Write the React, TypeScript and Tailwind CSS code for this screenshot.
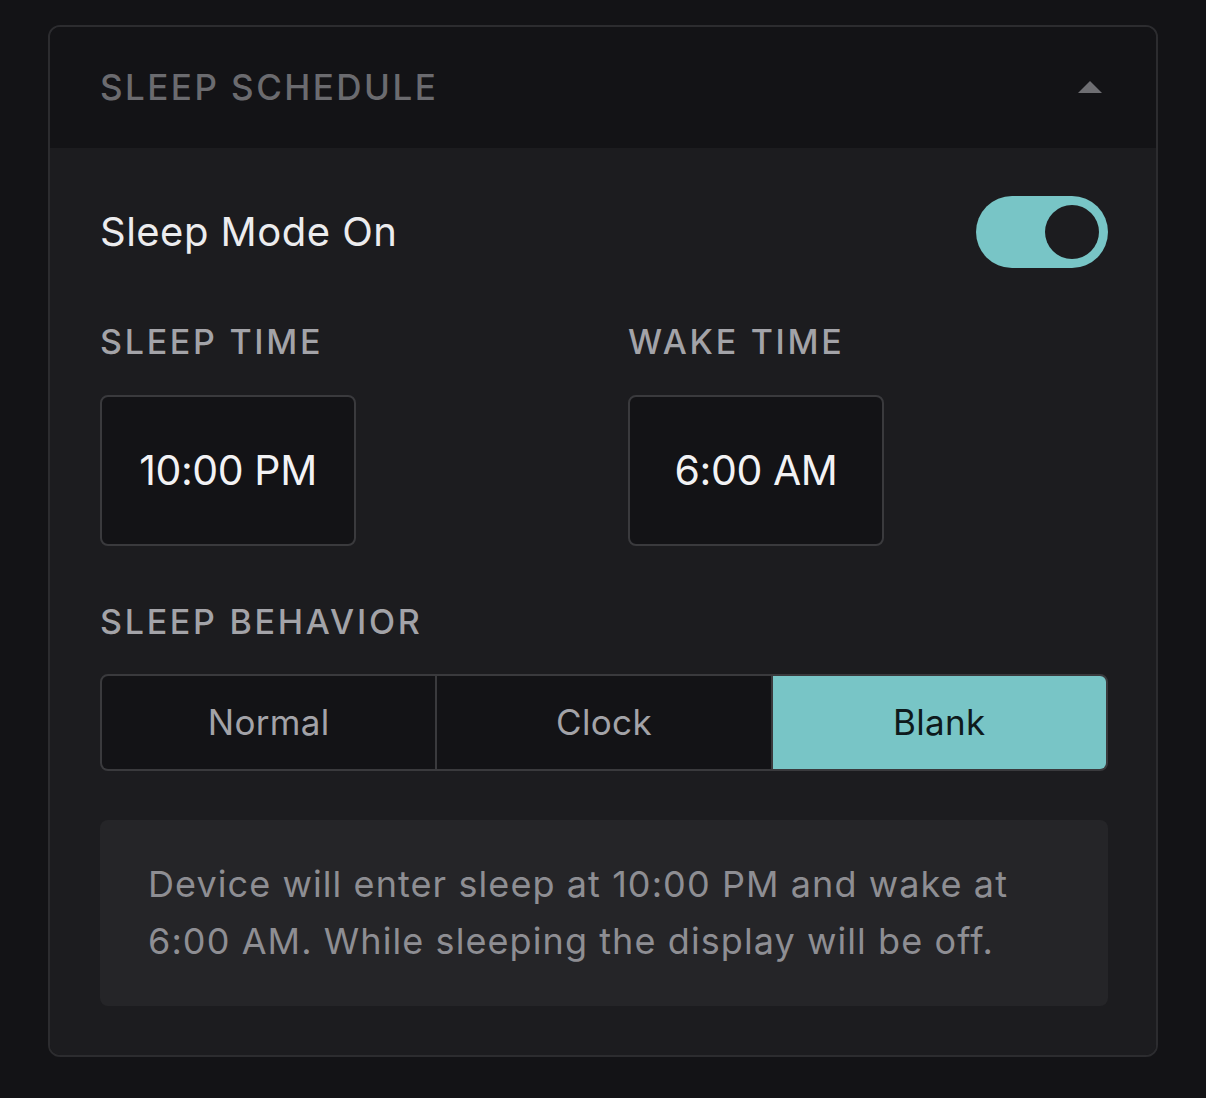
import React, { useState } from 'react';

type Behavior = 'Normal' | 'Clock' | 'Blank';

const BEHAVIORS: Behavior[] = ['Normal', 'Clock', 'Blank'];

export default function App() {
  const [open, setOpen] = useState(true);
  const [sleepOn, setSleepOn] = useState(true);
  const [behavior, setBehavior] = useState<Behavior>('Blank');

  return (
    <div
      className="min-h-screen bg-[#131316] px-12 pt-[25px] pb-[42px]"
      style={{ fontFamily: 'Inter, "Open Sans", sans-serif' }}
    >
      <div className="border-2 border-[#2c2c2f] rounded-[12px] overflow-hidden">
        {/* Header */}
        <button
          onClick={() => setOpen(!open)}
          className="w-full h-[121px] bg-[#131316] pl-[50px] pr-[54px] flex items-center justify-between"
        >
          <span className="text-[35px] tracking-[0.07em] text-[#6b6b6f] font-medium">SLEEP SCHEDULE</span>
          <svg width="24" height="12" viewBox="0 0 24 12" className="mt-[-2px]">
            <polygon points="12,0 24,12 0,12" fill="#6e6e72" />
          </svg>
        </button>

        {open && (
          <div className="bg-[#1c1c1f] pl-[50px] pr-[48px] pt-[48px] pb-[49px] flex flex-col">
            {/* Sleep mode row */}
            <div className="flex items-center justify-between">
              <span className="text-[40px] text-[#ececee] tracking-[0.012em]">Sleep Mode On</span>
              <button
                onClick={() => setSleepOn(!sleepOn)}
                className={`w-[132px] h-[72px] rounded-full flex items-center px-[9px] ${
                  sleepOn ? 'bg-[#78c5c6] justify-end' : 'bg-[#3a3a3d] justify-start'
                }`}
              >
                <span className="w-[54px] h-[54px] rounded-full bg-[#1c1c1f]" />
              </button>
            </div>

            {/* Times */}
            <div className="grid grid-cols-2 gap-[48px] mt-[53px]">
              {[
                { label: 'SLEEP TIME', value: '10:00 PM' },
                { label: 'WAKE TIME', value: '6:00 AM' },
              ].map((t) => (
                <div key={t.label} className="flex flex-col">
                  <span className="text-[34px] leading-[41px] tracking-[0.08em] text-[#a3a3a8] font-medium">
                    {t.label}
                  </span>
                  <div className="mt-[33px] w-[256px] h-[151px] bg-[#131316] border-2 border-[#3a3a3d] rounded-[8px] flex items-center justify-center">
                    <span className="text-[41px] text-[#f2f2f4] tracking-[-0.01em]">{t.value}</span>
                  </div>
                </div>
              ))}
            </div>

            {/* Behavior */}
            <span className="mt-[55px] text-[34px] leading-[41px] tracking-[0.08em] text-[#a3a3a8] font-medium">
              SLEEP BEHAVIOR
            </span>
            <div className="mt-[32px] h-[97px] border-2 border-[#3a3a3d] rounded-[8px] overflow-hidden grid grid-cols-3 bg-[#3a3a3d] gap-[2px]">
              {BEHAVIORS.map((b) => (
                <button
                  key={b}
                  onClick={() => setBehavior(b)}
                  className={`flex items-center justify-center text-[35px] tracking-[0.01em] ${
                    behavior === b ? 'bg-[#78c5c6] text-[#0e1a1c]' : 'bg-[#131316] text-[#a3a3a8]'
                  }`}
                >
                  {b}
                </button>
              ))}
            </div>

            {/* Info */}
            <div className="mt-[49px] bg-[#252528] rounded-[8px] pl-[48px] pr-[64px] py-[36px]">
              <p className="text-[36px] leading-[57px] text-[#8e8e93] tracking-[0.03em]">
                Device will enter sleep at 10:00 PM and wake at 6:00 AM. While sleeping the display will be off.
              </p>
            </div>
          </div>
        )}
      </div>
    </div>
  );
}
